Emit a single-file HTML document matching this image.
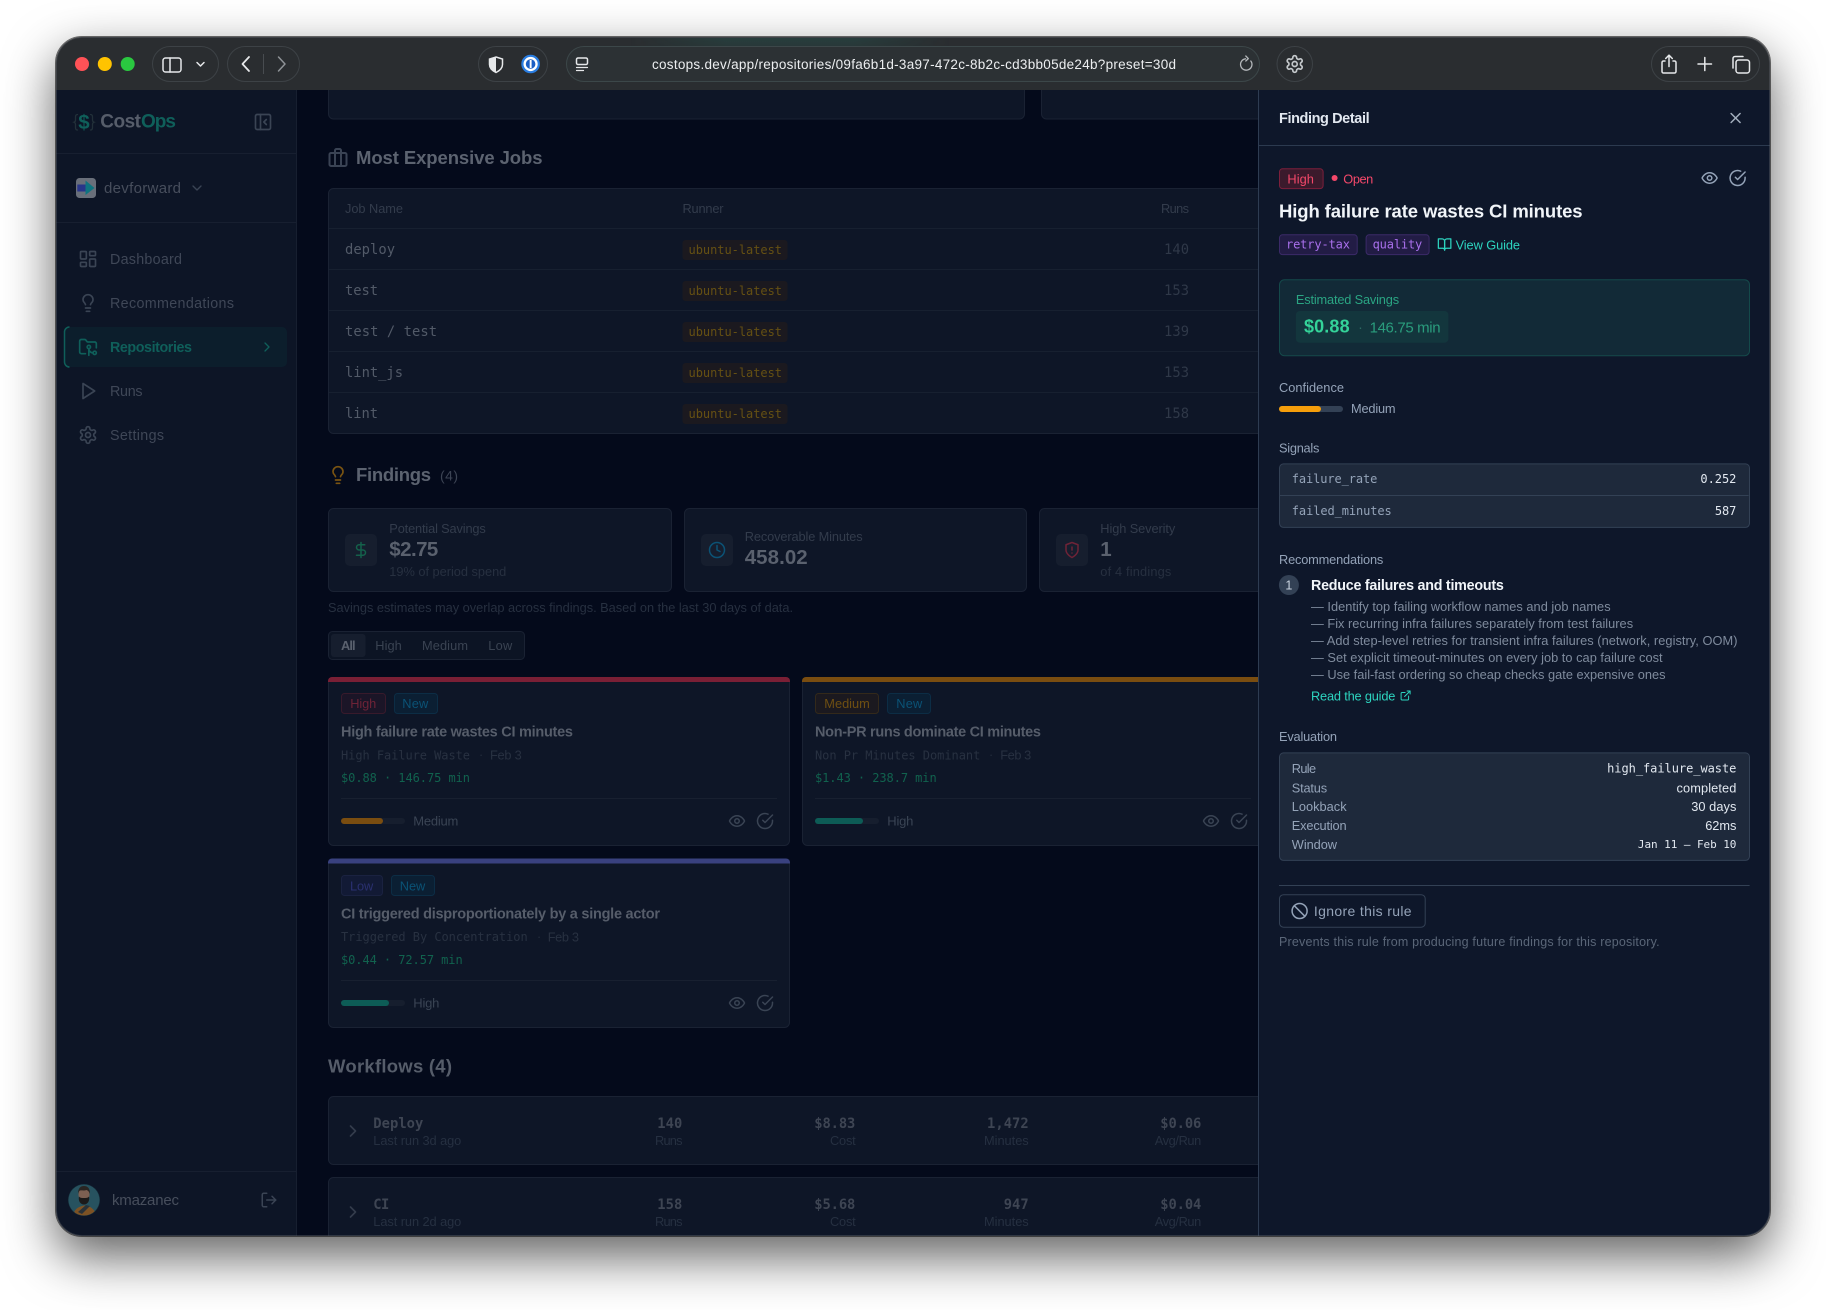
<!DOCTYPE html>
<html lang="en"><head><meta charset="utf-8"><title>CostOps – Finding Detail</title>
<style>
html,body{margin:0;padding:0;background:#fff;width:1826px;height:1310px;overflow:hidden}
#sh{position:absolute;left:56px;top:37px;width:1714px;height:1199px;border-radius:26px;box-shadow:0 20px 50px 1px rgba(0,0,0,.62)}
svg{position:absolute;left:0;top:0;display:block}
text{font-family:"Liberation Sans",Arial,sans-serif;white-space:pre}
.m{font-family:"DejaVu Sans Mono","Liberation Mono",monospace}
.b{font-weight:700}
.i{fill:none;stroke-width:2;stroke-linecap:round;stroke-linejoin:round}
</style></head><body>
<div id="sh"></div>
<svg width="1826" height="1310" viewBox="0 0 1826 1310" xmlns="http://www.w3.org/2000/svg">
<defs>
<clipPath id="win"><rect x="56" y="37" width="1714" height="1199" rx="26"/></clipPath>
<clipPath id="mainc"><rect x="296" y="90" width="963" height="1146"/></clipPath>
<clipPath id="av"><circle cx="84" cy="1200" r="15.5"/></clipPath>
<linearGradient id="tint" x1="0" x2="1" y1="0" y2="0"><stop offset="0" stop-color="#1f7a6c" stop-opacity="0"/><stop offset=".3" stop-color="#1f7a6c" stop-opacity=".22"/><stop offset=".7" stop-color="#1f7a6c" stop-opacity=".22"/><stop offset="1" stop-color="#1f7a6c" stop-opacity="0"/></linearGradient>
<linearGradient id="tintv" x1="0" x2="0" y1="0" y2="1"><stop offset="0" stop-color="#fff"/><stop offset="1" stop-color="#000"/></linearGradient>
<mask id="tm"><rect x="630" y="38" width="320" height="26" fill="url(#tintv)"/></mask>
<symbol id="eye" viewBox="0 0 24 24"><path d="M2 12s3-7 10-7 10 7 10 7-3 7-10 7-10-7-10-7Z"/><circle cx="12" cy="12" r="3"/></symbol>
<symbol id="chk" viewBox="0 0 24 24"><path d="M22 11.08V12a10 10 0 1 1-5.930-9.140"/><path d="m9 11 3 3L22 4"/></symbol>
<symbol id="gear" viewBox="0 0 24 24"><path d="M12.220 2h-.44a2 2 0 0 0-2 2v.18a2 2 0 0 1-1 1.730l-.43.25a2 2 0 0 1-2 0l-.15-.08a2 2 0 0 0-2.730.73l-.22.38a2 2 0 0 0 .73 2.730l.15.1a2 2 0 0 1 1 1.720v.51a2 2 0 0 1-1 1.740l-.15.09a2 2 0 0 0-.73 2.730l.22.38a2 2 0 0 0 2.730.73l.15-.08a2 2 0 0 1 2 0l.43.25a2 2 0 0 1 1 1.730V20a2 2 0 0 0 2 2h.44a2 2 0 0 0 2-2v-.18a2 2 0 0 1 1-1.730l.43-.25a2 2 0 0 1 2 0l.15.08a2 2 0 0 0 2.730-.73l.22-.39a2 2 0 0 0-.73-2.730l-.15-.08a2 2 0 0 1-1-1.740v-.5a2 2 0 0 1 1-1.740l.15-.09a2 2 0 0 0 .73-2.730l-.22-.38a2 2 0 0 0-2.730-.73l-.15.08a2 2 0 0 1-2 0l-.43-.25a2 2 0 0 1-1-1.730V4a2 2 0 0 0-2-2z"/><circle cx="12" cy="12" r="3"/></symbol>
<symbol id="bulb" viewBox="0 0 24 24"><path d="M15 14c.2-1 .7-1.700 1.500-2.500 1-.9 1.500-2.200 1.500-3.500A6 6 0 0 0 6 8c0 1 .2 2.200 1.500 3.500.7.7 1.300 1.500 1.500 2.500"/><path d="M9 18h6"/><path d="M10 22h4"/></symbol>
</defs>

<g clip-path="url(#win)">
<!-- title bar -->
<rect x="56" y="37" width="1714" height="53" fill="#2a2d30"/>
<rect x="630" y="38" width="320" height="26" fill="url(#tint)" mask="url(#tm)"/>
<!-- sidebar -->
<rect x="56" y="90" width="240" height="1146" fill="#0d1526"/>
<rect x="296" y="90" width="1" height="1146" fill="#171f30"/>
<!-- main -->
<rect x="297" y="90" width="962" height="1146" fill="#040a1b"/>

<g clip-path="url(#mainc)">
<rect x="328.500" y="70" width="696" height="49" rx="5" fill="#0e1627" stroke="#1a2233"/>
<rect x="1041.500" y="70" width="300" height="49" rx="5" fill="#0e1627" stroke="#1a2233"/>

<g class="i" stroke="#3a4354" stroke-width="1.300" fill="none"><rect x="329.500" y="153" width="17" height="13" rx="1.500"/><path d="M335 166v-15.500a1.500 1.500 0 0 1 1.500-1.500h3a1.500 1.500 0 0 1 1.500 1.500V166"/></g>
<text x="356" y="164" class="b" font-size="18.500" fill="#5c6370" textLength="186.500">Most Expensive Jobs</text>

<!-- jobs table -->
<rect x="328.500" y="188.500" width="1000" height="245" rx="5" fill="#0e1627" stroke="#1a2233"/>
<g fill="#172030"><rect x="329" y="228" width="930" height="1"/><rect x="329" y="269" width="930" height="1"/><rect x="329" y="310" width="930" height="1"/><rect x="329" y="351" width="930" height="1"/><rect x="329" y="392" width="930" height="1"/></g>
<g font-size="12.800" fill="#333c4c"><text x="345" y="213" textLength="58">Job Name</text><text x="682.500" y="213" textLength="41">Runner</text><text x="1161" y="213" textLength="28">Runs</text></g>
<g font-size="13.800" fill="#525a68">
<text class="m" x="345" y="254" textLength="50">deploy</text>
<text class="m" x="345" y="295" textLength="33">test</text>
<text class="m" x="345" y="336" textLength="92">test / test</text>
<text class="m" x="345" y="377" textLength="58">lint_js</text>
<text class="m" x="345" y="418" textLength="33">lint</text>
</g>
<g fill="#1b191f"><rect x="682.500" y="240" width="105" height="20" rx="3"/><rect x="682.500" y="281" width="105" height="20" rx="3"/><rect x="682.500" y="322" width="105" height="20" rx="3"/><rect x="682.500" y="363" width="105" height="20" rx="3"/><rect x="682.500" y="404" width="105" height="20" rx="3"/></g>
<g font-size="12" fill="#655013">
<text class="m" x="688.500" y="254" textLength="93.500">ubuntu-latest</text>
<text class="m" x="688.500" y="295" textLength="93.500">ubuntu-latest</text>
<text class="m" x="688.500" y="336" textLength="93.500">ubuntu-latest</text>
<text class="m" x="688.500" y="377" textLength="93.500">ubuntu-latest</text>
<text class="m" x="688.500" y="418" textLength="93.500">ubuntu-latest</text>
</g>
<g font-size="13.800" fill="#2f3848">
<text class="m" x="1164" y="254" textLength="25">140</text>
<text class="m" x="1164" y="295" textLength="25">153</text>
<text class="m" x="1164" y="336" textLength="25">139</text>
<text class="m" x="1164" y="377" textLength="25">153</text>
<text class="m" x="1164" y="418" textLength="25">158</text>
</g>

<!-- findings head -->
<svg x="328" y="465" width="20" height="20" viewBox="0 0 24 24" class="i" stroke="#7a5412"><use href="#bulb" width="24" height="24"/></svg>
<text x="356" y="481" class="b" font-size="18.500" fill="#5c6370" textLength="75">Findings</text>
<text x="440" y="480.500" font-size="14" fill="#3c4454" textLength="18">(4)</text>

<!-- stat cards -->
<rect x="328.500" y="508.500" width="343" height="83" rx="5" fill="#0e1627" stroke="#1a2233"/>
<rect x="684.500" y="508.500" width="342" height="83" rx="5" fill="#0e1627" stroke="#1a2233"/>
<rect x="1039.500" y="508.500" width="300" height="83" rx="5" fill="#0e1627" stroke="#1a2233"/>
<g fill="#161e2e"><rect x="345" y="534" width="32" height="32" rx="5"/><rect x="701" y="534" width="32" height="32" rx="5"/><rect x="1056" y="534" width="32" height="32" rx="5"/></g>
<svg x="352" y="541" width="18" height="18" viewBox="0 0 24 24" class="i" stroke="#14614b"><path d="M12 2v20"/><path d="M17 5H9.500a3.500 3.500 0 0 0 0 7h5a3.500 3.500 0 0 1 0 7H6"/></svg>
<svg x="708" y="541" width="18" height="18" viewBox="0 0 24 24" class="i" stroke="#0b5275"><circle cx="12" cy="12" r="10"/><path d="M12 6v6l4 2"/></svg>
<svg x="1063" y="541" width="18" height="18" viewBox="0 0 24 24" class="i" stroke="#6e2337"><path d="M12 22s8-4 8-10V5l-8-3-8 3v7c0 6 8 10 8 10"/><path d="M12 8v4"/><path d="M12 16h.01"/></svg>
<g font-size="12.800" fill="#333c4c">
<text x="389.300" y="533" textLength="96.500">Potential Savings</text>
<text x="744.700" y="541" textLength="118">Recoverable Minutes</text>
<text x="1100.300" y="533" textLength="75">High Severity</text>
</g>
<g class="b" font-size="20.500" fill="#5a616e">
<text x="389.300" y="556" textLength="49">$2.75</text>
<text x="744.700" y="564" textLength="63">458.02</text>
<text x="1100.300" y="556">1</text>
</g>
<g font-size="12.800" fill="#273040">
<text x="389.300" y="576" textLength="117">19% of period spend</text>
<text x="1100.300" y="576" textLength="71">of 4 findings</text>
<text x="328" y="612" textLength="465">Savings estimates may overlap across findings. Based on the last 30 days of data.</text>
</g>

<!-- tabs -->
<rect x="328.500" y="631.500" width="196" height="28" rx="4" fill="#0c1424" stroke="#1a2233"/>
<rect x="331" y="634" width="34.500" height="23" rx="3" fill="#161e2e"/>
<text x="341" y="650" font-size="12.800" class="b" fill="#5a616e" textLength="14.500">All</text>
<g font-size="12.800" fill="#3a4352"><text x="375.300" y="650" textLength="26.500">High</text><text x="422" y="650" textLength="46">Medium</text><text x="488.300" y="650" textLength="24">Low</text></g>

<!-- finding card 1 -->
<rect x="328.500" y="677.500" width="461" height="168" rx="5" fill="#0e1627" stroke="#1a2233"/>
<path d="M328 682v-1a4 4 0 0 1 4-4h454a4 4 0 0 1 4 4v1z" fill="#7a1f35"/>
<rect x="341.500" y="693.500" width="44" height="20" rx="3" fill="#1b1527" stroke="#381a2b"/>
<text x="350.300" y="708" font-size="12.800" fill="#6e2337" textLength="26">High</text>
<rect x="394.500" y="693.500" width="43" height="20" rx="3" fill="#0b1f33" stroke="#0c2d45"/>
<text x="402.300" y="708" font-size="12.800" fill="#0b5275" textLength="26">New</text>
<text x="341" y="736.500" class="b" font-size="14.500" fill="#565d6a" textLength="232">High failure rate wastes CI minutes</text>
<text class="m" x="341" y="759.300" font-size="12" fill="#283141" textLength="129">High Failure Waste</text>
<text x="479" y="759" font-size="12.500" fill="#242d3d">·</text>
<text x="490" y="759.300" font-size="12.800" fill="#283141" textLength="31.700">Feb 3</text>
<text class="m" x="341" y="782" font-size="12" fill="#11624e" textLength="129">$0.88 · 146.75 min</text>
<rect x="341" y="798" width="436" height="1" fill="#182030"/>
<rect x="341" y="818" width="64" height="6" rx="3" fill="#161e2e"/><rect x="341" y="818" width="42" height="6" rx="3" fill="#7a4d10"/>
<text x="413.300" y="825.700" font-size="13" fill="#3a4454" textLength="45">Medium</text>
<svg x="728" y="812" width="18" height="18" class="i" stroke="#3a4454"><use href="#eye" width="18" height="18"/></svg>
<svg x="756" y="812" width="18" height="18" class="i" stroke="#3a4454"><use href="#chk" width="18" height="18"/></svg>

<!-- finding card 2 -->
<rect x="802.500" y="677.500" width="560" height="168" rx="5" fill="#0e1627" stroke="#1a2233"/>
<path d="M802 682v-1a4 4 0 0 1 4-4h560v5z" fill="#7a4d10"/>
<rect x="815.500" y="693.500" width="63" height="20" rx="3" fill="#1b191f" stroke="#33291a"/>
<text x="824.300" y="708" font-size="12.800" fill="#6e4f12" textLength="45.500">Medium</text>
<rect x="887.500" y="693.500" width="43" height="20" rx="3" fill="#0b1f33" stroke="#0c2d45"/>
<text x="896.300" y="708" font-size="12.800" fill="#0b5275" textLength="26">New</text>
<text x="815" y="736.500" class="b" font-size="14.500" fill="#565d6a" textLength="226">Non-PR runs dominate CI minutes</text>
<text class="m" x="815" y="759.300" font-size="12" fill="#283141" textLength="165.300">Non Pr Minutes Dominant</text>
<text x="989" y="759" font-size="12.500" fill="#242d3d">·</text>
<text x="1000.300" y="759.300" font-size="12.800" fill="#283141" textLength="31">Feb 3</text>
<text class="m" x="815" y="782" font-size="12" fill="#11624e" textLength="121.700">$1.43 · 238.7 min</text>
<rect x="815" y="798" width="436" height="1" fill="#182030"/>
<rect x="815" y="818" width="64" height="6" rx="3" fill="#161e2e"/><rect x="815" y="818" width="48" height="6" rx="3" fill="#0d5c56"/>
<text x="887.300" y="825.700" font-size="13" fill="#3a4454" textLength="26">High</text>
<svg x="1202" y="812" width="18" height="18" class="i" stroke="#3a4454"><use href="#eye" width="18" height="18"/></svg>
<svg x="1230" y="812" width="18" height="18" class="i" stroke="#3a4454"><use href="#chk" width="18" height="18"/></svg>

<!-- finding card 3 -->
<rect x="328.500" y="859.500" width="461" height="168" rx="5" fill="#0e1627" stroke="#1a2233"/>
<path d="M328 863.500v-1a4 4 0 0 1 4-4h454a4 4 0 0 1 4 4v1z" fill="#39417f"/>
<rect x="341.500" y="875.500" width="41" height="20" rx="3" fill="#121a35" stroke="#1a2240"/>
<text x="350" y="890.300" font-size="12.800" fill="#2a3070" textLength="23.300">Low</text>
<rect x="391.500" y="875.500" width="43" height="20" rx="3" fill="#0b1f33" stroke="#0c2d45"/>
<text x="399.700" y="890.300" font-size="12.800" fill="#0b5275" textLength="25.600">New</text>
<text x="341" y="918.700" class="b" font-size="14.500" fill="#565d6a" textLength="319">CI triggered disproportionately by a single actor</text>
<text class="m" x="341" y="941" font-size="12" fill="#283141" textLength="186.700">Triggered By Concentration</text>
<text x="537" y="941" font-size="12.500" fill="#242d3d">·</text>
<text x="547.700" y="941.300" font-size="12.800" fill="#283141" textLength="31.300">Feb 3</text>
<text class="m" x="341" y="964" font-size="12" fill="#11624e" textLength="121.700">$0.44 · 72.57 min</text>
<rect x="341" y="980" width="436" height="1" fill="#182030"/>
<rect x="341" y="1000" width="64" height="6" rx="3" fill="#161e2e"/><rect x="341" y="1000" width="48" height="6" rx="3" fill="#0d5c56"/>
<text x="413.300" y="1007.700" font-size="13" fill="#3a4454" textLength="26">High</text>
<svg x="728" y="994" width="18" height="18" class="i" stroke="#3a4454"><use href="#eye" width="18" height="18"/></svg>
<svg x="756" y="994" width="18" height="18" class="i" stroke="#3a4454"><use href="#chk" width="18" height="18"/></svg>

<!-- workflows -->
<text x="328" y="1072.300" class="b" font-size="18.500" fill="#565d6a" textLength="124">Workflows (4)</text>
<rect x="328.500" y="1096.500" width="1000" height="68" rx="5" fill="#0e1627" stroke="#1a2233"/>
<rect x="328.500" y="1177.500" width="1000" height="80" rx="5" fill="#0e1627" stroke="#1a2233"/>
<svg x="343" y="1121" width="20" height="20" viewBox="0 0 24 24" class="i" stroke="#333c4b"><path d="m9 18 6-6-6-6"/></svg>
<svg x="343" y="1202" width="20" height="20" viewBox="0 0 24 24" class="i" stroke="#333c4b"><path d="m9 18 6-6-6-6"/></svg>
<g font-size="13.800" font-weight="700" fill="#3e4553">
<text class="m" x="373.300" y="1128" textLength="50">Deploy</text>
<text class="m" x="657.300" y="1128" textLength="25">140</text>
<text class="m" x="814.300" y="1128" textLength="41">$8.83</text>
<text class="m" x="987" y="1128" textLength="41.700">1,472</text>
<text class="m" x="1160.300" y="1128" textLength="41">$0.06</text>
<text class="m" x="373.300" y="1209" textLength="16">CI</text>
<text class="m" x="657.300" y="1209" textLength="25">158</text>
<text class="m" x="814.300" y="1209" textLength="41">$5.68</text>
<text class="m" x="1003.700" y="1209" textLength="25">947</text>
<text class="m" x="1160.300" y="1209" textLength="41">$0.04</text>
</g>
<g font-size="12.800" fill="#263041">
<text x="373.300" y="1145" textLength="88">Last run 3d ago</text>
<text x="655" y="1145" textLength="27.500">Runs</text>
<text x="830" y="1145" textLength="25.700">Cost</text>
<text x="984" y="1145" textLength="44.700">Minutes</text>
<text x="1154.700" y="1145" textLength="46.600">Avg/Run</text>
<text x="373.300" y="1226" textLength="88">Last run 2d ago</text>
<text x="655" y="1226" textLength="27.500">Runs</text>
<text x="830" y="1226" textLength="25.700">Cost</text>
<text x="984" y="1226" textLength="44.700">Minutes</text>
<text x="1154.700" y="1226" textLength="46.600">Avg/Run</text>
</g>
</g>

<!-- sidebar content -->
<g fill="none" stroke="#223039" stroke-width="1.300" stroke-linecap="round"><path d="M77.500 114.500c-1.500 0-2 1-2 2.500v3c0 1.500-.8 2-1.500 2.200.7.300 1.500.8 1.500 2.300v3c0 1.500.5 2.500 2 2.500"/><path d="M90.500 114.500c1.500 0 2 1 2 2.500v3c0 1.500.8 2 1.500 2.200-.7.300-1.500.8-1.500 2.300v3c0 1.500-.5 2.500-2 2.500"/></g>
<text x="84" y="129" text-anchor="middle" class="b" font-size="20.500" fill="#0f5f5a">$</text>
<text x="100.300" y="127.700" class="b" font-size="19" fill="#565d6a" textLength="40.700">Cost</text>
<text x="141" y="127.700" class="b" font-size="19" fill="#0f5f5a" textLength="35">Ops</text>
<svg x="253" y="112" width="20" height="20" viewBox="0 0 24 24" class="i" stroke="#3a4454" stroke-width="1.700"><rect x="3" y="3" width="18" height="18" rx="2"/><path d="M9 3v18"/><path d="m16 15-3-3 3-3"/></svg>
<rect x="56" y="153" width="240" height="1" fill="#171f30"/>
<rect x="56" y="222" width="240" height="1" fill="#171f30"/>
<rect x="76" y="178" width="20" height="20" rx="3.500" fill="#696f7a"/>
<rect x="77.300" y="184.500" width="9" height="7" fill="#28368a"/>
<path d="M85.500 180.500l9 7.500-9 7z" fill="#0f7480"/>
<text x="104" y="193" font-size="15" fill="#474e5c" textLength="77">devforward</text>
<svg x="189" y="180" width="16" height="16" viewBox="0 0 24 24" class="i" stroke="#3a4454"><path d="m6 9 6 6 6-6"/></svg>

<rect x="64.500" y="327" width="222.500" height="40" rx="5" fill="#0c1e2c"/>
<path d="M69.500 327a5 5 0 0 0-5 5v30a5 5 0 0 0 5 5" fill="none" stroke="#0f5f5a" stroke-width="1.500"/>

<svg x="78" y="249" width="20" height="20" viewBox="0 0 24 24" class="i" stroke="#3a4454"><rect x="3" y="3" width="7" height="9" rx="1"/><rect x="14" y="3" width="7" height="5" rx="1"/><rect x="14" y="12" width="7" height="9" rx="1"/><rect x="3" y="16" width="7" height="5" rx="1"/></svg>
<svg x="78" y="293" width="20" height="20" viewBox="0 0 24 24" class="i" stroke="#3a4454"><use href="#bulb" width="24" height="24"/></svg>
<svg x="78" y="337" width="20" height="20" viewBox="0 0 24 24" class="i" stroke="#0f5f5a"><path d="M9 20H4a2 2 0 0 1-2-2V5a2 2 0 0 1 2-2h3.900a2 2 0 0 1 1.690.9l.81 1.200a2 2 0 0 0 1.670.9H20a2 2 0 0 1 2 2v5"/><circle cx="13" cy="12" r="2"/><path d="M18 19c-2.800 0-5-2.200-5-5v8"/><circle cx="20" cy="19" r="2"/></svg>
<svg x="78" y="381" width="20" height="20" viewBox="0 0 24 24" class="i" stroke="#3a4454"><polygon points="6 3 20 12 6 21 6 3"/></svg>
<svg x="78" y="425" width="20" height="20" viewBox="0 0 24 24" class="i" stroke="#3a4454"><use href="#gear" width="24" height="24"/></svg>
<g font-size="14.300" fill="#3f4757">
<text x="110" y="264" textLength="72">Dashboard</text>
<text x="110" y="308" textLength="124">Recommendations</text>
<text x="110" y="396" textLength="32.500">Runs</text>
<text x="110" y="440" textLength="54">Settings</text>
</g>
<text x="110" y="352" font-size="14.300" font-weight="700" fill="#0f5f5a" textLength="82">Repositories</text>
<svg x="259" y="339" width="16" height="16" viewBox="0 0 24 24" class="i" stroke="#0f5f5a"><path d="m9 18 6-6-6-6"/></svg>

<rect x="56" y="1171" width="240" height="1" fill="#171f30"/>
<circle cx="84" cy="1200" r="16" fill="#16303d"/>
<g clip-path="url(#av)">
<rect x="68" y="1184" width="32" height="32" fill="#27525f"/>
<path d="M73 1216c1-6 4-9 11-10.500 6 0 11 4 13 10.500z" fill="#7d5224"/>
<path d="M78 1212l8-7 4 1-8 8z" fill="#2a3238"/>
<ellipse cx="84" cy="1194.500" rx="5.500" ry="6.500" fill="#7d6052"/>
<path d="M78 1194c0-6 2.500-8 6-8s6 2 6 8c-1-2.500-2-3.500-3.500-4-2.500 1-5 0-6.500.5-1 .5-1.500 1.500-2 3.500z" fill="#2a2522"/>
<path d="M79 1196.500c1 1.500 3 1.500 5 1.500s4 0 5-1.500c1 4.500-1.500 8-5 8s-6-3.500-5-8z" fill="#1c1a1a"/>
</g>
<text x="112" y="1205" font-size="15" fill="#474e5c" textLength="67">kmazanec</text>
<svg x="260" y="1191" width="18" height="18" viewBox="0 0 24 24" class="i" stroke="#3a4454"><path d="M9 21H5a2 2 0 0 1-2-2V5a2 2 0 0 1 2-2h4"/><path d="m16 17 5-5-5-5"/><path d="M21 12H9"/></svg>

<!-- detail panel -->
<rect x="1258" y="90" width="512" height="1146" fill="#0e172a"/>
<rect x="1258" y="90" width="1" height="1146" fill="#2e3c52"/>
<rect x="1259" y="145" width="511" height="1" fill="#2c3a4f"/>
<g transform="translate(-.4 0)">
<text x="1279.400" y="123" font-size="14.500" font-weight="700" fill="#e2e8f0" textLength="90.600">Finding Detail</text>
<svg x="1727" y="109" width="18" height="18" viewBox="0 0 24 24" class="i" stroke="#a3aebd"><path d="M18 6 6 18"/><path d="m6 6 12 12"/></svg>

<rect x="1279.900" y="168.800" width="43.600" height="19.800" rx="3" fill="#3b1a2c" stroke="#7c1f3b"/>
<text x="1287.800" y="183.300" font-size="12.800" fill="#f4486a" textLength="26.500">High</text>
<circle cx="1335" cy="178" r="3" fill="#f4486a"/>
<text x="1343.700" y="183.300" font-size="12.800" fill="#f4486a" textLength="30">Open</text>
<svg x="1701" y="169" width="18" height="18" class="i" stroke="#94a3b8"><use href="#eye" width="18" height="18"/></svg>
<svg x="1729" y="169" width="18" height="18" class="i" stroke="#94a3b8"><use href="#chk" width="18" height="18"/></svg>
<text x="1279.400" y="217.300" class="b" font-size="18.500" fill="#f1f5f9" textLength="303.600">High failure rate wastes CI minutes</text>

<rect x="1279.900" y="234.800" width="77.700" height="19.800" rx="3" fill="#221c45" stroke="#3b2a68"/>
<text class="m" x="1286.400" y="248.300" font-size="12" fill="#a970ec" textLength="64">retry-tax</text>
<rect x="1366.500" y="234.800" width="63" height="19.800" rx="3" fill="#221c45" stroke="#3b2a68"/>
<text class="m" x="1373" y="248.300" font-size="12" fill="#a970ec" textLength="49.700">quality</text>
<svg x="1437.500" y="237" width="15" height="15" viewBox="0 0 24 24" class="i" stroke="#2dd4bf"><path d="M2 3h6a4 4 0 0 1 4 4v14a3 3 0 0 0-3-3H2z"/><path d="M22 3h-6a4 4 0 0 0-4 4v14a3 3 0 0 1 3-3h7z"/></svg>
<text x="1456" y="249.300" font-size="12.800" fill="#2dd4bf" textLength="64.400">View Guide</text>

<rect x="1279.900" y="279.800" width="470" height="75.900" rx="5" fill="#122a37" stroke="#14494a"/>
<text x="1296.300" y="304" font-size="12.800" fill="#2aa583" textLength="103.200">Estimated Savings</text>
<rect x="1296.300" y="311" width="152.500" height="31.700" rx="4" fill="#13363d"/>
<text x="1304.400" y="332.700" class="b" font-size="18" fill="#34d399" textLength="45.600">$0.88</text>
<text x="1358.500" y="332" font-size="14" fill="#2c6a62">·</text>
<text x="1370" y="332.300" font-size="15" fill="#2a9d7d" textLength="71">146.75 min</text>

<g font-size="12.800" fill="#94a3b8">
<text x="1279.400" y="392" textLength="65">Confidence</text>
<text x="1351.400" y="413" textLength="44.600">Medium</text>
<text x="1279.400" y="452.300" textLength="40.400">Signals</text>
<text x="1279.400" y="564" textLength="104.300">Recommendations</text>
<text x="1279.400" y="741" textLength="58">Evaluation</text>
</g>
<rect x="1279.400" y="406" width="64" height="6" rx="3" fill="#334155"/><rect x="1279.400" y="406" width="42" height="6" rx="3" fill="#f59e0b"/>

<rect x="1279.900" y="463.900" width="470" height="63.500" rx="4" fill="#1e293b" stroke="#334155"/>
<rect x="1280" y="495" width="469" height="1" fill="#334155"/>
<g font-size="12">
<text class="m" x="1292.200" y="483" fill="#94a3b8" textLength="85.600">failure_rate</text>
<text class="m" x="1700.800" y="483" fill="#e2e8f0" textLength="36">0.252</text>
<text class="m" x="1292.200" y="515" fill="#94a3b8" textLength="100">failed_minutes</text>
<text class="m" x="1715.300" y="515" fill="#e2e8f0" textLength="21.500">587</text>
</g>

<circle cx="1289.300" cy="585" r="10" fill="#334155"/>
<text x="1289.300" y="589.500" text-anchor="middle" font-size="12.500" fill="#cbd5e1">1</text>
<text x="1311.400" y="590" class="b" font-size="14.300" fill="#f1f5f9" textLength="192.800">Reduce failures and timeouts</text>
<g font-size="12.800" fill="#7f8b9d">
<text x="1311.400" y="611" textLength="299.600">— Identify top failing workflow names and job names</text>
<text x="1311.400" y="628" textLength="322.100">— Fix recurring infra failures separately from test failures</text>
<text x="1311.400" y="645" textLength="426.500">— Add step-level retries for transient infra failures (network, registry, OOM)</text>
<text x="1311.400" y="662" textLength="351.600">— Set explicit timeout-minutes on every job to cap failure cost</text>
<text x="1311.400" y="679" textLength="354.500">— Use fail-fast ordering so cheap checks gate expensive ones</text>
</g>
<text x="1311.400" y="700.300" font-size="12.800" fill="#2dd4bf" textLength="84.400">Read the guide</text>
<svg x="1400" y="689.500" width="12" height="12" viewBox="0 0 24 24" class="i" stroke="#2dd4bf"><path d="M18 13v6a2 2 0 0 1-2 2H5a2 2 0 0 1-2-2V8a2 2 0 0 1 2-2h6"/><path d="M15 3h6v6"/><path d="M10 14 21 3"/></svg>

<rect x="1279.900" y="752.900" width="470" height="107.500" rx="4" fill="#1e293b" stroke="#334155"/>
<g font-size="12.800" fill="#94a3b8">
<text x="1292.200" y="773" textLength="24.300">Rule</text>
<text x="1292.200" y="792.300" textLength="35.300">Status</text>
<text x="1292.200" y="811.200" textLength="54.800">Lookback</text>
<text x="1292.200" y="830" textLength="54.800">Execution</text>
<text x="1292.200" y="849" textLength="45.200">Window</text>
</g>
<text class="m" x="1607.500" y="772.300" font-size="12" fill="#e2e8f0" textLength="129.300">high_failure_waste</text>
<g font-size="12.800" fill="#e2e8f0">
<text x="1676.900" y="792.300" textLength="59.900">completed</text>
<text x="1691.600" y="811.200" textLength="45.200">30 days</text>
<text x="1705.600" y="830" textLength="31.200">62ms</text>
</g>
<text class="m" x="1638.300" y="848" font-size="11" fill="#e2e8f0" textLength="98.500">Jan 11 – Feb 10</text>

<rect x="1279.400" y="885" width="470.600" height="1" fill="#334155"/>
<rect x="1279.900" y="894.700" width="145.700" height="32.500" rx="4" fill="none" stroke="#334155"/>
<svg x="1291" y="902" width="18" height="18" viewBox="0 0 24 24" class="i" stroke="#94a3b8"><circle cx="12" cy="12" r="10"/><path d="m4.900 4.900 14.200 14.200"/></svg>
<text x="1314.300" y="916" font-size="14" fill="#94a3b8" textLength="97.700">Ignore this rule</text>
<text x="1279.400" y="946" font-size="12.500" fill="#5a6678" textLength="380.600">Prevents this rule from producing future findings for this repository.</text>
</g>

<!-- chrome: traffic lights -->
<circle cx="82" cy="64" r="7" fill="#ff5257"/>
<circle cx="104.800" cy="64" r="7" fill="#ffc300"/>
<circle cx="127.700" cy="64" r="7" fill="#2ac840"/>

<g fill="none" stroke="#3d4246">
<rect x="152.500" y="46.500" width="66" height="35" rx="17.500"/>
<rect x="227.500" y="46.500" width="72" height="35" rx="17.500"/>
<rect x="478.500" y="46.500" width="69" height="35" rx="17.500"/>
<rect x="1277" y="46.500" width="35.500" height="35" rx="17.500"/>
<rect x="1651.500" y="46.500" width="108" height="35" rx="17.500"/>
</g>
<rect x="566.500" y="46.500" width="693" height="35" rx="17.500" fill="#2c3134" stroke="#3c4749"/>
<rect x="263" y="54" width="1" height="20" fill="#484c50"/>

<g fill="none" stroke="#e6e8ea" stroke-width="1.500" stroke-linecap="round" stroke-linejoin="round">
<rect x="163" y="58" width="18" height="14" rx="2.500"/><path d="M170 58v14"/>
<path d="M197 62.500l3.500 3.500 3.500-3.500"/>
<path d="M249 57l-6.500 7 6.500 7" stroke-width="1.800"/>
<path d="M278.500 57l6.500 7-6.500 7" stroke="#8f9397" stroke-width="1.500"/>
<rect x="576.500" y="58" width="11" height="6.500" rx="1.500"/><path d="M576.500 67.500h11M576.500 70.500h7" stroke-width="1.200"/>
<path d="M1250.800 61a5.700 5.700 0 1 1-5.300-2.200" stroke="#b4b8bb" stroke-width="1.300"/><path d="M1245.800 56l2.500 2.600-2.500 2.400" stroke="#b4b8bb" stroke-width="1.300"/>
<path d="M1669 55.500v11M1665.700 58.500l3.300-3.300 3.300 3.300"/><path d="M1665 61h-1.500a1.500 1.500 0 0 0-1.500 1.500v9a1.500 1.500 0 0 0 1.500 1.500h11a1.500 1.500 0 0 0 1.500-1.500v-9a1.500 1.500 0 0 0-1.500-1.500H1673"/>
<path d="M1704.800 57.500v13M1698 64h13.500"/>
<rect x="1736" y="60" width="13.500" height="13" rx="2.500"/><path d="M1733 68v-9.500a2 2 0 0 1 2-2h8"/>
</g>
<path d="M496 57l6.500 2v5.500c0 3.500-2.500 6-6.500 8-4-2-6.500-4.500-6.500-8V59z" fill="none" stroke="#e6e8ea" stroke-width="1.500"/>
<path d="M496 57l-6.500 2v5.500c0 3.500 2.500 6 6.500 8z" fill="#e6e8ea"/>
<circle cx="530.600" cy="64" r="8.200" fill="#fff" stroke="#2a7de1" stroke-width="2.200"/>
<circle cx="530.600" cy="64" r="4.800" fill="#1c5fc4"/>
<rect x="529.700" y="60" width="1.900" height="8" fill="#fff"/>
<svg x="1284.700" y="54" width="20" height="20" viewBox="0 0 24 24" class="i" stroke="#c4c8cb" stroke-width="1.600"><use href="#gear" width="24" height="24"/></svg>
<text x="652" y="69" font-size="13.500" fill="#eceef0" textLength="524">costops.dev/app/repositories/09fa6b1d-3a97-472c-8b2c-cd3bb05de24b?preset=30d</text>
</g>
<rect x="55.500" y="36.500" width="1715" height="1200" rx="26.500" fill="none" stroke="#111" stroke-opacity=".6" stroke-width="1"/>
<rect x="56.500" y="37.500" width="1713" height="1198" rx="25.500" fill="none" stroke="#5c6065" stroke-opacity=".45" stroke-width="1"/>
</svg>
</body></html>
